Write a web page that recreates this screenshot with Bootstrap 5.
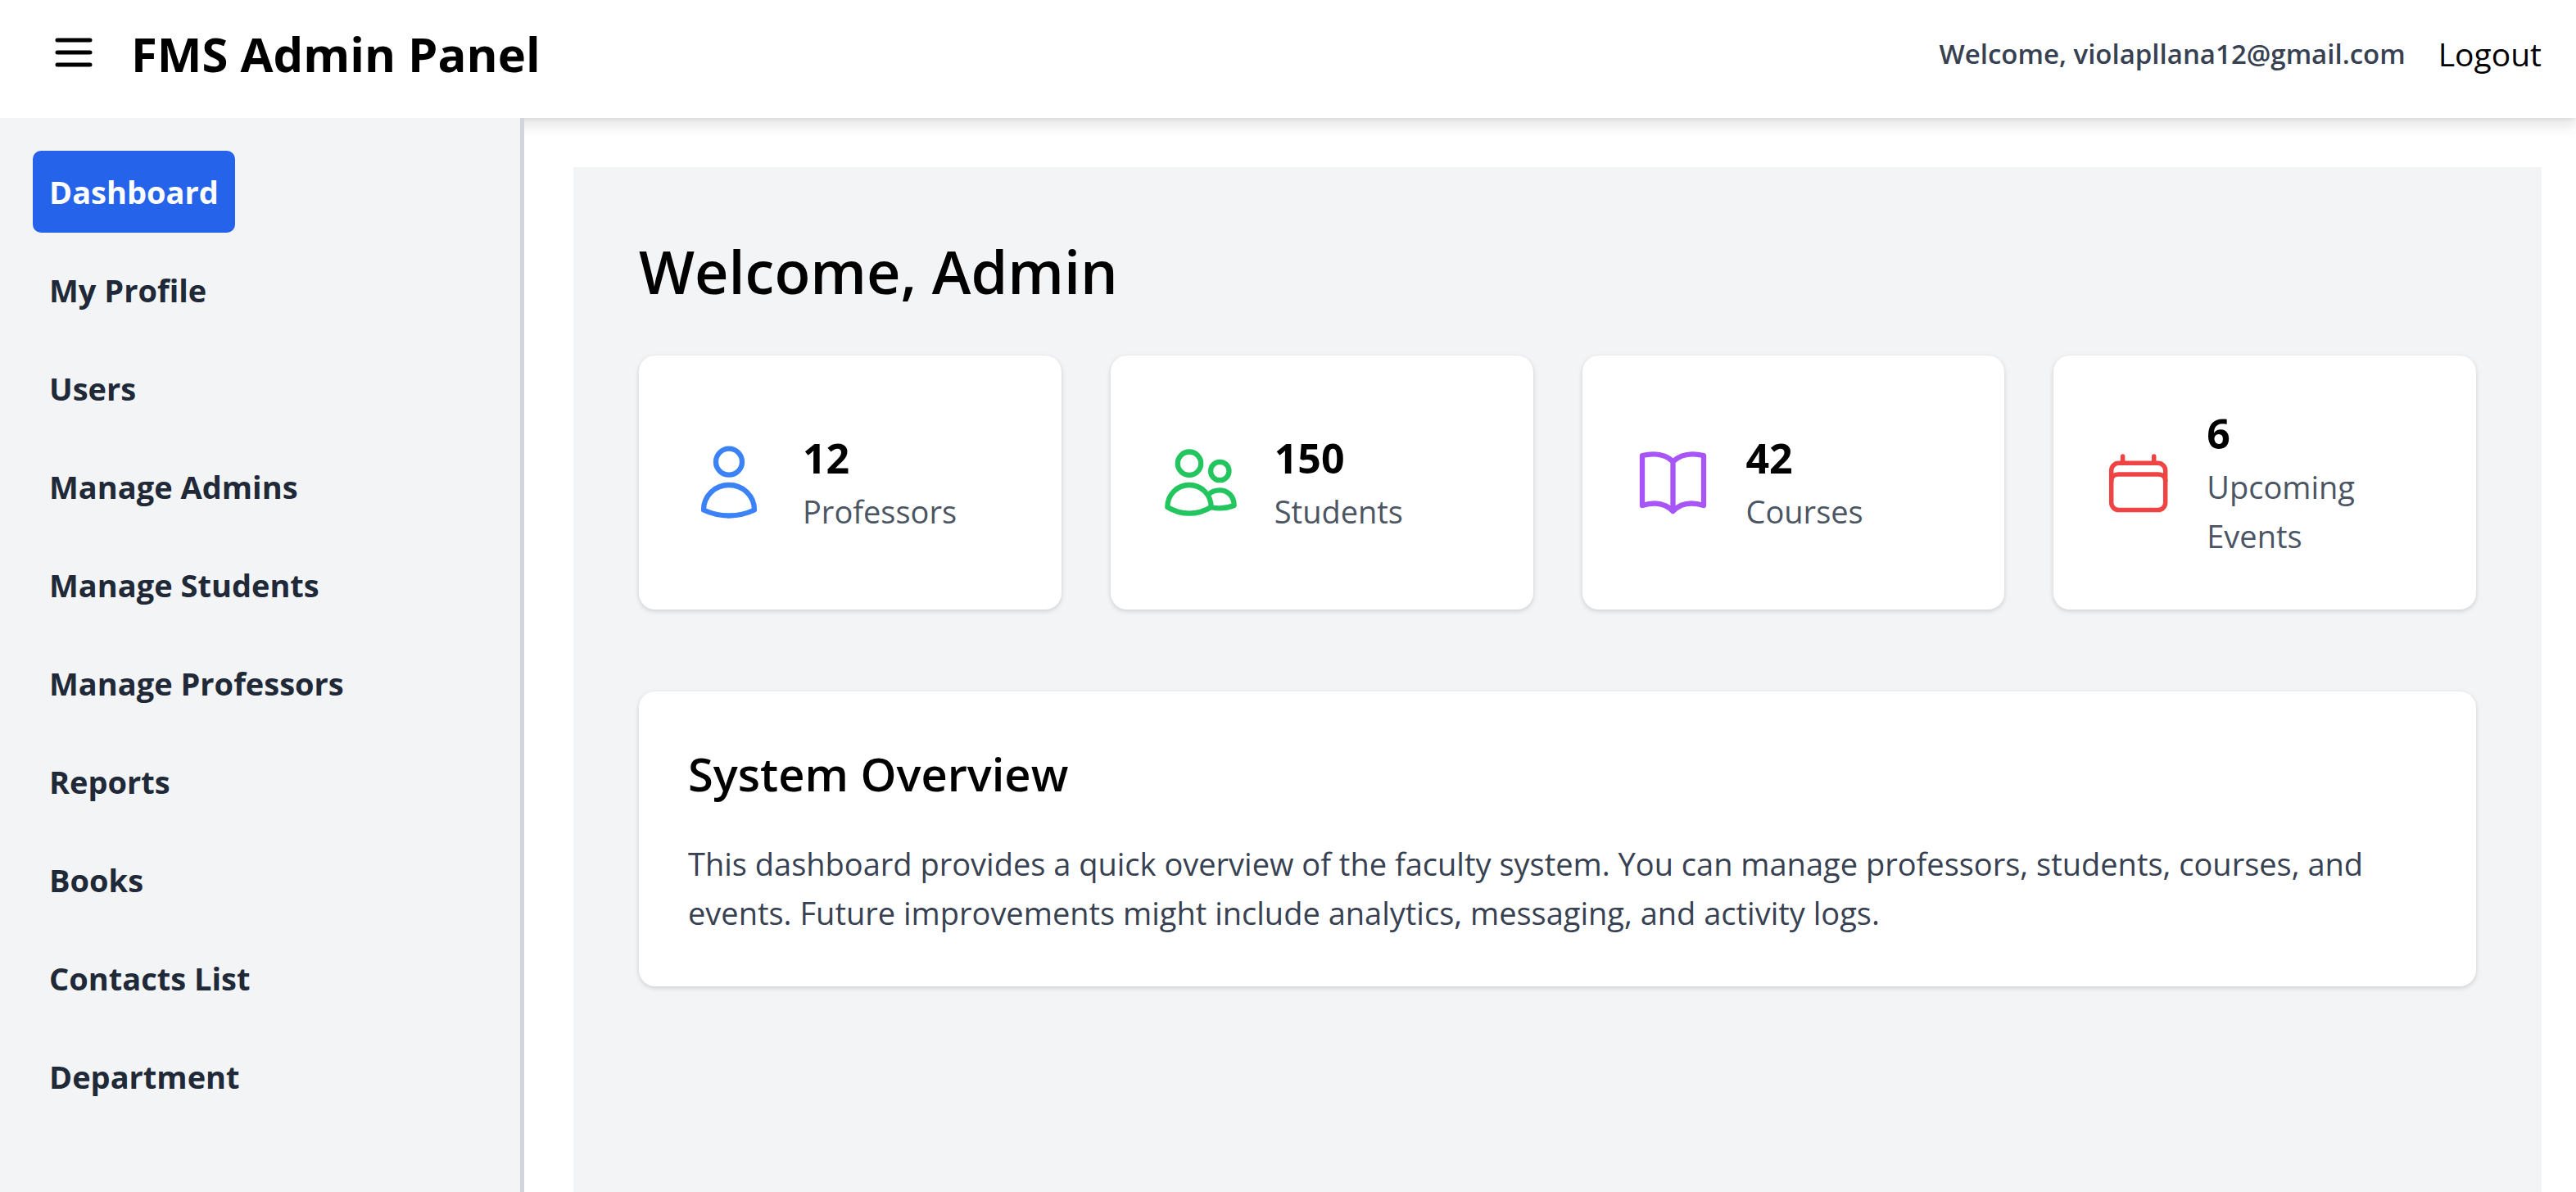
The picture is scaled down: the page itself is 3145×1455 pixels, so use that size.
<!DOCTYPE html>
<html lang="en">
<head>
<meta charset="utf-8">
<meta name="viewport" content="width=device-width, initial-scale=1">
<title>FMS Admin Panel</title>
<link href="https://cdn.jsdelivr.net/npm/bootstrap@5.3.0/dist/css/bootstrap.min.css" rel="stylesheet">
<style>
  body { font-family: "Open Sans", "Noto Sans", sans-serif; font-size: 38px; line-height: 60px; color: #000; background: #fff; }
  .topbar { padding: 20px 42px 32px 60px; min-height: 144px; background: #fff; box-shadow: 0 2px 4px rgba(0,0,0,.06), 0 10px 15px rgba(0,0,0,.1); }
  .topbar-group { gap: 40px; }
  .menu-toggle { border: 0; background: none; padding: 0; line-height: 0; color: #000; }
  .brand-title { font-size: 58px; line-height: 80px; font-weight: 700; }
  .user-note { font-size: 33px; line-height: 50px; font-weight: 600; color: #374151; }
  .logout-btn { border: 0; background: none; padding: 0; font-size: 39px; color: #000; }
  .side { width: 640px; padding: 40px; gap: 20px; background: #f3f4f6; border-right: 5px solid #d1d5db; z-index: 1; }
  .side .nav-link { padding: 20px; border-radius: 10px; font-weight: 700; color: #1f2937; }
  .side .nav-link.active { background: #2563eb; color: #fff; }
  .content-area { padding: 60px 42px 0 60px; }
  .panel { background: #f3f4f6; padding: 80px; }
  .page-title { font-size: 72px; line-height: 94px; font-weight: 600; margin: 0 0 56px; }
  .tile { border: 0; border-radius: 20px; background: #fff; padding: 60px; box-shadow: 0 2px 7px rgba(0,0,0,.1), 0 2px 5px rgba(0,0,0,.06); }
  .stats { --bs-gutter-x: 60px; --bs-gutter-y: 60px; margin-bottom: 100px; }
  .stat { gap: 40px; }
  .stat-icon { width: 100px; height: 100px; fill: none; stroke-width: 6.3; stroke-linecap: round; stroke-linejoin: round; }
  .stat-icon-sm { width: 87px; height: 87px; stroke-width: 5.5; }
  .stat-num { font-size: 50px; line-height: 70px; font-weight: 700; }
  .stat-label { color: #4b5563; }
  .tile-title { font-size: 56px; line-height: 80px; font-weight: 600; margin: 0 0 40px; }
  .tile-text { color: #374151; margin: 0; }
</style>
</head>
<body class="d-flex flex-column min-vh-100">
<header class="topbar d-flex align-items-center justify-content-between">
  <div class="topbar-group d-flex align-items-center">
    <button class="menu-toggle" type="button" aria-label="Toggle menu">
      <svg width="60" height="60" viewBox="0 0 60 60" fill="none" stroke="currentColor" stroke-width="5" stroke-linecap="round"><path d="M10 13H50M10 28H50M10 43H50"/></svg>
    </button>
    <h1 class="brand-title m-0">FMS Admin Panel</h1>
  </div>
  <div class="topbar-group d-flex align-items-center">
    <span class="user-note">Welcome, violapllana12@gmail.com</span>
    <button class="logout-btn" type="button">Logout</button>
  </div>
</header>
<div class="d-flex flex-grow-1">
  <nav class="side nav flex-column flex-nowrap align-items-start flex-shrink-0">
    <a class="nav-link active" href="#">Dashboard</a>
    <a class="nav-link" href="#">My Profile</a>
    <a class="nav-link" href="#">Users</a>
    <a class="nav-link" href="#">Manage Admins</a>
    <a class="nav-link" href="#">Manage Students</a>
    <a class="nav-link" href="#">Manage Professors</a>
    <a class="nav-link" href="#">Reports</a>
    <a class="nav-link" href="#">Books</a>
    <a class="nav-link" href="#">Contacts List</a>
    <a class="nav-link" href="#">Department</a>
  </nav>
  <main class="content-area d-flex flex-grow-1">
    <div class="panel flex-grow-1">
      <h2 class="page-title">Welcome, Admin</h2>
      <div class="row stats">
        <div class="col-3"><div class="tile stat d-flex align-items-center h-100">
          <svg class="stat-icon flex-shrink-0" viewBox="0 0 100 100" stroke="#3b82f6"><circle cx="50" cy="24.7" r="16"/><path d="M19 83.5C19 66 33 53 50 53S81 66 81 83.5Q66 90.5 50 90.5T19 83.5Z"/></svg>
          <div><div class="stat-num">12</div><div class="stat-label">Professors</div></div>
        </div></div>
        <div class="col-3"><div class="tile stat d-flex align-items-center h-100">
          <svg class="stat-icon flex-shrink-0" viewBox="0 0 100 100" stroke="#22c55e"><circle cx="36" cy="26.7" r="14.2"/><circle cx="73.3" cy="36" r="11.2"/><path d="M9.3 80C9.3 65 21 53 36 53S62.7 65 62.7 80Q50 87.7 36 87.7T9.3 80ZM59.7 64.5C63 61 68 59.3 73.3 59.3C83 59.3 90.7 67 90.7 78Q78 83 63.5 80.5"/></svg>
          <div><div class="stat-num">150</div><div class="stat-label">Students</div></div>
        </div></div>
        <div class="col-3"><div class="tile stat d-flex align-items-center h-100">
          <svg class="stat-icon flex-shrink-0" viewBox="0 0 100 100" stroke="#a855f7"><path d="M50.5 24.5C40 14 26 14 13 17V78C26 74 40 74 50.5 85C61 74 75 74 88 78V17C75 14 61 14 50.5 24.5V85"/></svg>
          <div><div class="stat-num">42</div><div class="stat-label">Courses</div></div>
        </div></div>
        <div class="col-3"><div class="tile stat d-flex align-items-center h-100">
          <svg class="stat-icon stat-icon-sm flex-shrink-0" viewBox="0 0 87 87" stroke="#ef4444"><rect x="10.7" y="19.3" width="66" height="57.3" rx="9"/><path d="M10.7 41C10.7 36 14 33 19.7 33H67.7C73.4 33 76.7 36 76.7 41M24.6 11V18M62.7 11V18"/></svg>
          <div><div class="stat-num">6</div><div class="stat-label">Upcoming Events</div></div>
        </div></div>
      </div>
      <section class="tile">
        <h3 class="tile-title">System Overview</h3>
        <p class="tile-text">This dashboard provides a quick overview of the faculty system. You can manage professors, students, courses, and events. Future improvements might include analytics, messaging, and activity logs.</p>
      </section>
    </div>
  </main>
</div>
<script src="https://cdn.jsdelivr.net/npm/bootstrap@5.3.0/dist/js/bootstrap.bundle.min.js"></script>
</body>
</html>
